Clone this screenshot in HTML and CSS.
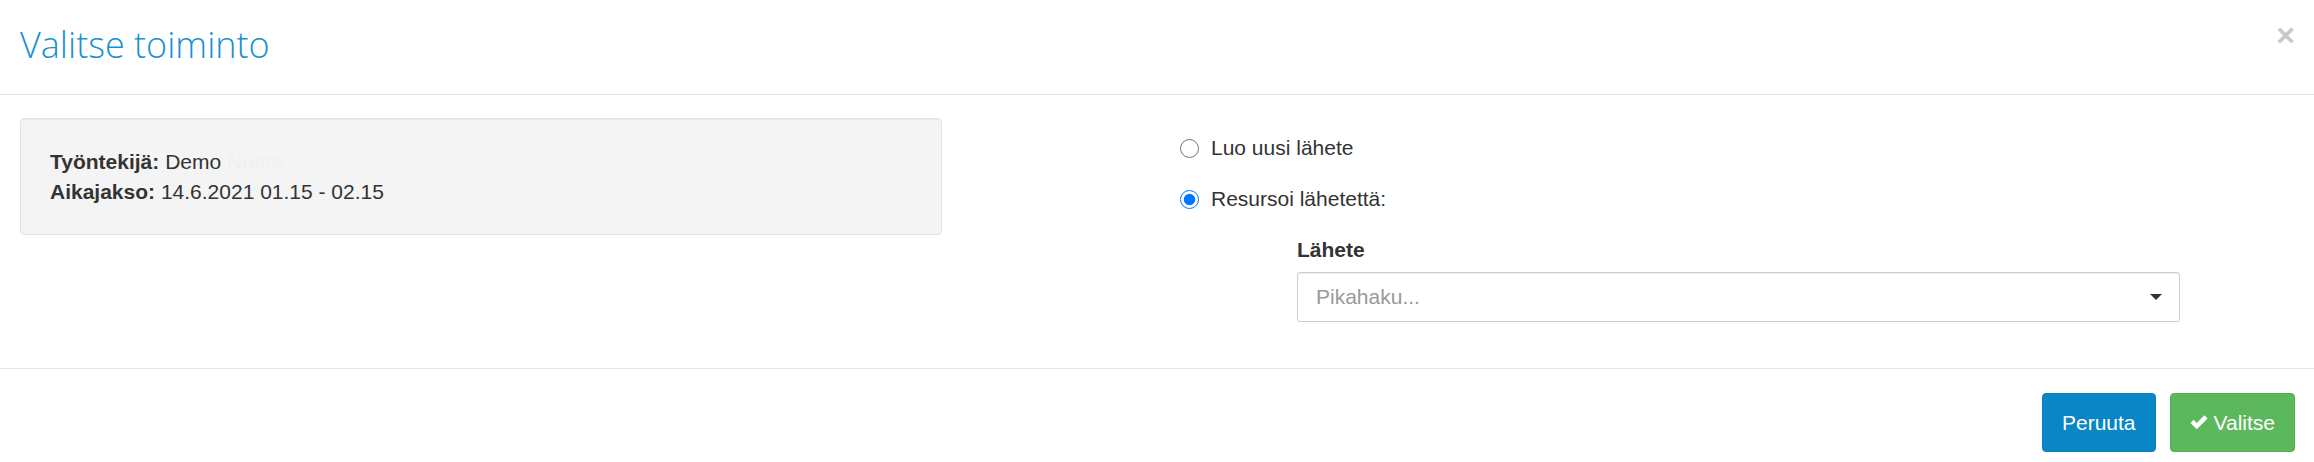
FILE: index.html
```html
<!DOCTYPE html>
<html lang="fi">
<head>
    <meta charset="UTF-8">
    <title>Valitse toiminto</title>
    <link rel="stylesheet" href="styles.css">
</head>
<body>

<div class="modal">
    <div class="modal-header">
        <h3 class="modal-title">Valitse toiminto</h3>
        <button class="close" type="button">&times;</button>
    </div>

    <div class="modal-body">
        <div class="left-col">
            <div class="well">
                <div><b>Työntekijä:</b> Demo <span class="faded">Noora</span></div>
                <div><b>Aikajakso:</b> 14.6.2021 01.15 - 02.15</div>
            </div>
        </div>

        <div class="right-col">
            <label class="radio">
                <input type="radio" name="action">
                <span>Luo uusi lähete</span>
            </label>
            <label class="radio">
                <input type="radio" name="action" checked>
                <span>Resursoi lähetettä:</span>
            </label>

            <div class="form-group">
                <div class="control-label">Lähete</div>
                <div class="select-box">
                    <span class="placeholder">Pikahaku...</span>
                    <span class="caret"></span>
                </div>
            </div>
        </div>
    </div>

    <div class="modal-footer">
        <button class="btn btn-primary" type="button">Peruuta</button>
        <button class="btn btn-success" type="button">
            <svg class="icon-ok" viewBox="0 0 20 16" width="18" height="15">
                <path d="M0.5 8.5 L4 5 L7.5 8.5 L16 0 L19.5 3.5 L7.5 15.5 Z" fill="#fff"/>
            </svg>
            Valitse
        </button>
    </div>
</div>

</body>
</html>
```

FILE: styles.css
```css
body {
    margin: 0;
    padding: 0;
    background: #fff;
    font-family: "Liberation Sans", Arial, sans-serif;
    font-size: 21px;
    line-height: 30px;
    color: #333;
}

.modal {
    width: 2314px;
    height: 462px;
    background: #fff;
}

.modal-header {
    display: flex;
    align-items: flex-start;
    justify-content: space-between;
    padding: 20px 19px 25px 20px;
    border-bottom: 1px solid #e5e5e5;
}

.modal-title {
    margin: 0;
    font-family: "Open Sans", sans-serif;
    font-weight: 300;
    font-size: 36px;
    line-height: 49px;
    color: #1a8fd4;
}

.close {
    margin: 0;
    padding: 0;
    border: none;
    background: none;
    font-family: "Liberation Sans", Arial, sans-serif;
    font-weight: bold;
    font-size: 32px;
    line-height: 30px;
    color: #c8c8c8;
    cursor: pointer;
}

.modal-body {
    display: flex;
    padding: 23px 20px 22px 20px;
}

.left-col {
    width: 922px;
}

.well {
    padding: 28px 28px 27px 29px;
    background: #f4f4f4;
    border: 1px solid #e3e3e3;
    border-radius: 4px;
    box-shadow: inset 0 1px 1px rgba(0, 0, 0, 0.05);
}

.faded {
    color: #f0f0f0;
}

.right-col {
    flex: 1;
    margin-left: 238px;
    padding-top: 15px;
}

.radio {
    display: flex;
    align-items: center;
    gap: 12px;
    margin-bottom: 21px;
    cursor: pointer;
}

.radio input {
    width: 19px;
    height: 19px;
    margin: 0;
}

.form-group {
    margin-left: 117px;
    width: 883px;
    margin-top: 6px;
    margin-bottom: 24px;
}

.control-label {
    font-weight: bold;
    margin-bottom: 7px;
}

.select-box {
    display: flex;
    align-items: center;
    justify-content: space-between;
    box-sizing: border-box;
    height: 50px;
    padding: 0 17px 0 18px;
    border: 1px solid #ccc;
    border-radius: 3px;
    box-shadow: inset 0 1px 1px rgba(0, 0, 0, 0.075);
}

.placeholder {
    color: #999;
}

.caret {
    width: 0;
    height: 0;
    border-left: 6px solid transparent;
    border-right: 6px solid transparent;
    border-top: 6px solid #333;
}

.modal-footer {
    display: flex;
    justify-content: flex-end;
    gap: 14px;
    padding: 24px 19px 0 0;
    border-top: 1px solid #e5e5e5;
}

.btn {
    display: flex;
    align-items: center;
    gap: 6px;
    box-sizing: border-box;
    height: 59px;
    padding: 0 19px;
    border: 1px solid transparent;
    border-radius: 4px;
    font-family: "Liberation Sans", Arial, sans-serif;
    font-size: 21px;
    color: #fff;
    cursor: pointer;
}

.btn-primary {
    background: #0986c6;
    border-color: #0a7fbb;
}

.btn-success {
    background: #5cb85c;
    border-color: #53ad53;
}
```
